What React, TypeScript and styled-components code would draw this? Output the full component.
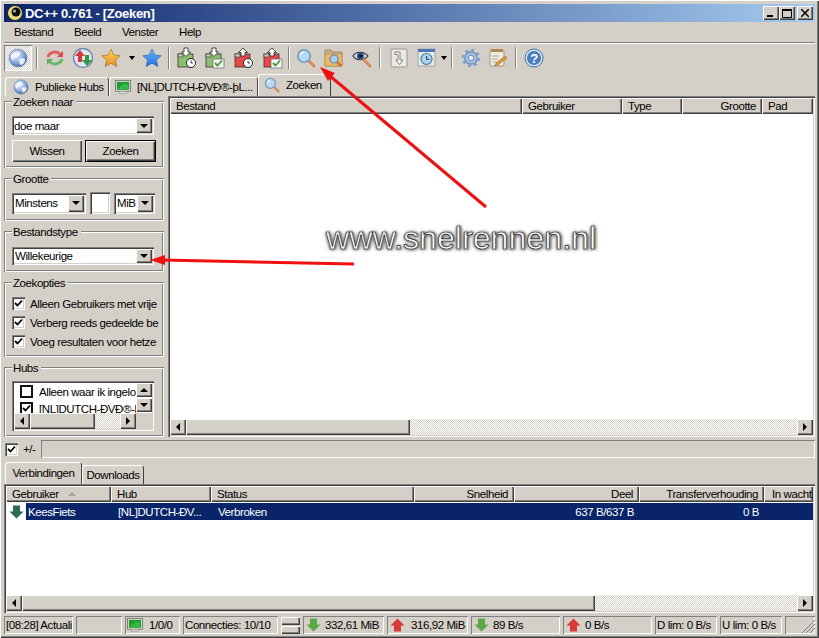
import React from "react"
import styled, { createGlobalStyle, css } from "styled-components"

const face = "#d4d0c8"
const shadow = "#808080"
const dark = "#404040"

const raised = css`
  background: ${face};
  box-shadow: inset 1px 1px 0 #fff, inset -1px -1px 0 ${dark}, inset -2px -2px 0 ${shadow};
`
const sunken = css`
  box-shadow: inset 1px 1px 0 ${shadow}, inset 2px 2px 0 ${dark}, inset -1px -1px 0 #fff, inset -2px -2px 0 ${face};
`
const thinSunken = css`
  box-shadow: inset 1px 1px 0 ${shadow}, inset -1px -1px 0 #fff;
`

const Global = createGlobalStyle`
  html, body { margin: 0; padding: 0; background: ${face}; }
  body { font-family: "Liberation Sans", Arial, sans-serif; font-size: 11.5px; letter-spacing: -0.42px; color: #000; }
  * { box-sizing: border-box; }
  svg { flex: none; }
`

const Window = styled.div`
  position: relative;
  width: 819px;
  height: 638px;
  padding: 4px;
  display: flex;
  flex-direction: column;
  background: ${face};
  overflow: hidden;
  box-shadow: inset 1px 1px 0 #fff, inset -1px -1px 0 ${dark}, inset -2px -2px 0 ${shadow};
`
const TitleBar = styled.div`
  height: 18px;
  flex: none;
  display: flex;
  align-items: center;
  padding: 0 2px 0 3px;
  background: linear-gradient(90deg, #0a246a, #a6caf0);
  color: #fff;
  font-weight: 700;
  font-size: 13px;
  letter-spacing: -0.3px;
  gap: 2px;
`
const TitleText = styled.span`
  flex: 1;
`
const CaptionButton = styled.div<{ $gap?: number }>`
  ${raised}
  width: 16px;
  height: 14px;
  margin-left: ${(p) => p.$gap ?? 0}px;
  display: flex;
  align-items: center;
  justify-content: center;
`
const MenuBar = styled.div`
  height: 20px;
  flex: none;
  display: flex;
  align-items: center;
  padding-left: 10px;
`
const MenuItem = styled.span<{ $width: number }>`
  width: ${(p) => p.$width}px;
`
const Rule = styled.div`
  height: 2px;
  flex: none;
  background: linear-gradient(${shadow} 50%, #fff 50%);
`
const Toolbar = styled.div`
  height: 27px;
  flex: none;
  display: flex;
  align-items: center;
`
const ToolSlot = styled.div<{ $width?: number; $pressed?: boolean }>`
  width: ${(p) => p.$width ?? 28}px;
  height: 26px;
  flex: none;
  display: flex;
  align-items: center;
  justify-content: center;
  ${(p) =>
    p.$pressed &&
    css`
      background: repeating-conic-gradient(#fff 0 25%, ${face} 0 50%) 0 0 / 2px 2px;
      box-shadow: inset 1px 1px 0 ${shadow}, inset -1px -1px 0 #fff;
    `}
`
const ToolSep = styled.div<{ $left?: number; $right?: number }>`
  width: 2px;
  height: 22px;
  flex: none;
  margin: 0 ${(p) => p.$right ?? 4}px 0 ${(p) => p.$left ?? 4}px;
  background: linear-gradient(90deg, ${shadow} 50%, #fff 50%);
`
const Caret = styled.div`
  width: 0;
  height: 0;
  flex: none;
  border: 3px solid transparent;
  border-top: 4px solid #000;
  border-bottom: 0;
`
const CaretSlot = styled.div<{ $width: number }>`
  width: ${(p) => p.$width}px;
  flex: none;
  display: flex;
  justify-content: center;
`
const TabStrip = styled.div`
  height: 25px;
  flex: none;
  display: flex;
  align-items: flex-end;
  padding-left: 1px;
`
const TopTab = styled.div<{ $width: number; $active?: boolean; $pl: number }>`
  width: ${(p) => p.$width}px;
  height: ${(p) => (p.$active ? 22 : 19)}px;
  flex: none;
  display: flex;
  align-items: center;
  gap: 6px;
  padding-left: ${(p) => p.$pl}px;
  white-space: nowrap;
  overflow: hidden;
  border-radius: 3px 3px 0 0;
  box-shadow: inset 1px 1px 0 #fff, inset -1px 0 0 ${dark};
`
const Main = styled.div`
  height: 341px;
  flex: none;
  display: flex;
`
const SidePanel = styled.div`
  width: 164px;
  flex: none;
  display: flex;
  flex-direction: column;
  padding-top: 5px;
`
const Group = styled.fieldset<{ $height: number; $mb: number }>`
  position: relative;
  width: 160px;
  height: ${(p) => p.$height}px;
  margin: 0 0 ${(p) => p.$mb}px 0;
  padding: 0 8px;
  border: 0;
  box-shadow: inset 1px 1px 0 ${shadow}, inset 2px 2px 0 #fff, inset -1px -1px 0 #fff, inset -2px -2px 0 ${shadow};
  display: flex;
  flex-direction: column;
`
const Legend = styled.span`
  position: absolute;
  top: -5px;
  left: 8px;
  padding: 0 3px 0 1px;
  background: ${face};
  line-height: 13px;
`
const Field = styled.div<{ $width: number; $height: number; $pl?: number }>`
  ${sunken}
  width: ${(p) => p.$width}px;
  height: ${(p) => p.$height}px;
  flex: none;
  background: #fff;
  display: flex;
  align-items: center;
  justify-content: space-between;
  padding: 2px 2px 2px ${(p) => p.$pl ?? 3}px;
  white-space: nowrap;
  overflow: hidden;
`
const DropButton = styled.div`
  ${raised}
  width: 16px;
  height: 100%;
  flex: none;
  display: flex;
  align-items: center;
  justify-content: center;
`
const DownCaret = styled(Caret)`
  border-width: 4px 4px 0;
  border-top-color: #000;
`
const ButtonRow = styled.div`
  display: flex;
  gap: 3px;
  margin-top: 5px;
`
const PushButton = styled.div<{ $width: number; $default?: boolean }>`
  ${raised}
  width: ${(p) => p.$width}px;
  height: 22px;
  display: flex;
  align-items: center;
  justify-content: center;
  ${(p) => p.$default && css`
    outline: 1px solid #000;
    outline-offset: -1px;
    box-shadow: inset 2px 2px 0 #fff, inset -2px -2px 0 ${dark}, inset -3px -3px 0 ${shadow};
  `}
`
const FieldRow = styled.div`
  display: flex;
  align-items: center;
  gap: 4px;
`
const CheckRow = styled.div`
  width: 144px;
  height: 19px;
  display: flex;
  align-items: center;
  gap: 5px;
  white-space: nowrap;
`
const Box = styled.div<{ $flat?: boolean }>`
  width: 13px;
  height: 13px;
  flex: none;
  background: #fff;
  display: flex;
  align-items: center;
  justify-content: center;
  ${(p) => (p.$flat ? "border: 2px solid #111;" : sunken)}
`
const HubList = styled.div`
  ${sunken}
  width: 142px;
  height: 50px;
  background: #fff;
  padding: 2px;
  display: grid;
  grid-template-columns: 1fr 16px;
  grid-template-rows: 30px 16px;
`
const HubItems = styled.div`
  padding: 2px 0 0 6px;
  overflow: hidden;
  display: flex;
  flex-direction: column;
  gap: 4px;
`
const HubItem = styled.div`
  display: flex;
  align-items: center;
  gap: 6px;
  height: 13px;
  white-space: nowrap;
`
const VScroll = styled.div`
  display: flex;
  flex-direction: column;
  gap: 1px;
`
const ScrollBtn = styled.div<{ $size?: number }>`
  ${raised}
  width: ${(p) => p.$size ?? 16}px;
  height: ${(p) => p.$size ?? 16}px;
  flex: none;
  display: flex;
  align-items: center;
  justify-content: center;
`
const SmallVBtn = styled(ScrollBtn)`
  height: 14px;
`
const ScrollCorner = styled.div`
  background: ${face};
`
const ScrollTrack = styled.div`
  height: 16px;
  flex: none;
  display: flex;
`
const Thumb = styled.div<{ $width: number }>`
  ${raised}
  width: ${(p) => p.$width}px;
  flex: none;
`
const Dither = styled.div`
  flex: 1;
  background: repeating-conic-gradient(${face} 0 25%, #fff 0 50%) 0 0 / 2px 2px;
`
const Arrow = styled.div<{ $dir: "l" | "r" | "u" | "d" }>`
  width: 0;
  height: 0;
  border-style: solid;
  border-color: transparent;
  ${(p) =>
    p.$dir === "l"
      ? "border-width: 4px 4px 4px 0; border-right-color: #000;"
      : p.$dir === "r"
        ? "border-width: 4px 0 4px 4px; border-left-color: #000;"
        : p.$dir === "u"
          ? "border-width: 0 4px 4px; border-bottom-color: #000;"
          : "border-width: 4px 4px 0; border-top-color: #000;"}
`
const ListPane = styled.div`
  ${sunken}
  flex: 1;
  min-width: 0;
  background: #fff;
  display: flex;
  flex-direction: column;
  padding: 2px;
`
const HeaderRow = styled.div`
  height: 16px;
  flex: none;
  display: flex;
  background: ${face};
`
const HeaderCell = styled.div<{ $width: number; $right?: boolean; $pl?: number }>`
  ${raised}
  width: ${(p) => p.$width}px;
  flex: none;
  display: flex;
  align-items: center;
  justify-content: ${(p) => (p.$right ? "flex-end" : "flex-start")};
  padding: 0 6px 0 ${(p) => p.$pl ?? 6}px;
  white-space: nowrap;
  overflow: hidden;
`
const ListBody = styled.div`
  flex: 1;
  min-height: 0;
`
const Row = styled.div`
  height: 17px;
  margin-top: 1px;
  display: flex;
  align-items: center;
`
const RowIcon = styled.div`
  width: 20px;
  flex: none;
  display: flex;
  justify-content: center;
`
const Selected = styled.div`
  flex: 1;
  height: 100%;
  display: flex;
  align-items: center;
  background: #0a246a;
  color: #fff;
`
const RowCell = styled.div<{ $width: number; $right?: boolean; $pl?: number }>`
  width: ${(p) => p.$width}px;
  flex: none;
  text-align: ${(p) => (p.$right ? "right" : "left")};
  padding: 0 6px 0 ${(p) => p.$pl ?? 6}px;
  white-space: nowrap;
`
const FilterRow = styled.div`
  height: 18px;
  margin-top: 3px;
  flex: none;
  display: flex;
  align-items: center;
  padding-left: 1px;
`
const PlusMinus = styled.span`
  margin-left: 5px;
  width: 18px;
`
const FilterInput = styled.div`
  flex: 1;
  height: 18px;
  box-shadow: inset 1px 1px 0 ${shadow}, inset -1px -1px 0 #fff;
`
const BottomTabs = styled.div`
  height: 23px;
  margin-top: 3px;
  flex: none;
  display: flex;
  align-items: flex-end;
  padding-left: 1px;
`
const BottomTab = styled.div<{ $width: number; $active?: boolean }>`
  width: ${(p) => p.$width}px;
  height: ${(p) => (p.$active ? 22 : 19)}px;
  flex: none;
  display: flex;
  align-items: center;
  justify-content: center;
  border-radius: 3px 3px 0 0;
  box-shadow: inset 1px 1px 0 #fff, inset -1px 0 0 ${dark};
`
const BottomPane = styled.div`
  height: 129px;
  flex: none;
  display: flex;
`
const StatusBar = styled.div`
  height: 18px;
  margin-top: 3px;
  flex: none;
  display: flex;
  gap: 3px;
`
const StatusCell = styled.div<{ $width: number; $gap?: number; $pl?: number }>`
  ${thinSunken}
  width: ${(p) => p.$width}px;
  flex: none;
  display: flex;
  align-items: center;
  gap: ${(p) => p.$gap ?? 6}px;
  padding-left: ${(p) => p.$pl ?? 2}px;
  white-space: nowrap;
  overflow: hidden;
`
const Spinner = styled.div`
  width: 19px;
  flex: none;
  display: flex;
  flex-direction: column;
  justify-content: center;
  gap: 1px;
`
const SpinPart = styled.div`
  ${raised}
  height: 8px;
`
const SortMark = styled.span`
  margin-left: 9px;
  width: 0;
  height: 0;
  border: 4px solid transparent;
  border-top: 0;
  border-bottom: 4px solid #a8a49c;
`
const Spacer = styled.div<{ $h: number }>`
  height: ${(p) => p.$h}px;
  flex: none;
`
const Overlay = styled.svg`
  position: absolute;
  left: 0;
  top: 0;
  pointer-events: none;
`
const Watermark = styled.div`
  position: absolute;
  left: 326px;
  top: 220px;
  font-size: 32.2px;
  line-height: 36px;
  letter-spacing: 0;
  color: #fff;
  -webkit-text-stroke: 0.7px #222;
  text-shadow: 2px 1px 3px #777, -1px 1px 3px #777, 1px -1px 3px #888;
  white-space: nowrap;
`

/* icons */
const Globe = ({ size = 20 }: { size?: number }) => (
  <svg width={size} height={size} viewBox="0 0 20 20">
    <defs>
      <radialGradient id="gl" cx="40%" cy="35%" r="70%">
        <stop offset="0" stopColor="#e8f0fb" />
        <stop offset="0.55" stopColor="#8fb0e0" />
        <stop offset="1" stopColor="#38609f" />
      </radialGradient>
    </defs>
    <circle cx="10" cy="10" r="9" fill="url(#gl)" stroke="#6080b0" strokeWidth="0.6" />
    <path d="M5 5c3-2 6-2 7 0s-2 3-3 4-3 0-3 2-2 1-3-1 0-4 2-5zM12 11c2-1 5-1 5 1s-2 5-4 5-1-3-2-4 0-2 1-2z" fill="#f2f4f8" opacity="0.9" />
  </svg>
)
const Refresh = () => (
  <svg width="20" height="20" viewBox="0 0 20 20" fill="none">
    <path d="M3 9a7 6 0 0 1 12-3" stroke="#e06060" strokeWidth="3" />
    <path d="M18 3v6h-6z" fill="#d84848" />
    <path d="M17 11a7 6 0 0 1-12 3" stroke="#68b868" strokeWidth="3" />
    <path d="M2 17v-6h6z" fill="#58b058" />
  </svg>
)
const GlobeArrows = () => (
  <svg width="22" height="22" viewBox="0 0 22 22">
    <circle cx="11" cy="11" r="9.5" fill="#dfe6f2" stroke="#6b84b0" strokeWidth="1.4" />
    <path d="M3 9l5-6 5 6H10v6H6V9z" fill="#d83838" />
    <path d="M10 13l5 6 5-6h-3V8h-4v5z" fill="#2f9a3f" />
  </svg>
)
const Star = ({ from, to, line, size = 20 }: { from: string; to: string; line: string; size?: number }) => (
  <svg width={size} height={size} viewBox="0 0 20 20">
    <defs>
      <linearGradient id={`st${from.slice(1)}`} x1="0" y1="0" x2="0" y2="1">
        <stop offset="0" stopColor={from} />
        <stop offset="1" stopColor={to} />
      </linearGradient>
    </defs>
    <path d="M10 1l2.8 6 6.4.7-4.8 4.3 1.4 6.5L10 15.2 4.2 18.5 5.6 12 .8 7.7 7.2 7z" fill={`url(#st${from.slice(1)})`} stroke={line} strokeWidth="0.7" />
  </svg>
)
const Queue = ({ color, up, check }: { color: string; up?: boolean; check?: boolean }) => (
  <svg width="20" height="22" viewBox="0 0 20 22">
    <rect x="1" y="7" width="15" height="13" fill={color} stroke="#333" strokeWidth="0.8" />
    <rect x="1" y="7" width="5" height="3" fill="#c8c8c0" stroke="#333" strokeWidth="0.6" />
    <path d={up ? "M9 1l4.5 4.5H11V9H7V5.5H4.500z" : "M7 1h4v4h2.500L9 9.500 4.500 5H7z"} fill="#fff" stroke="#222" strokeWidth="0.8" />
    {check ? (
      <g>
        <rect x="8" y="12" width="11" height="9" fill="#f4f4f0" stroke="#555" strokeWidth="0.6" />
        <path d="M10 16l2.500 2.500 4.500-5" fill="none" stroke="#3a9a3a" strokeWidth="1.800" />
      </g>
    ) : (
      <g>
        <circle cx="14" cy="16" r="4.500" fill="#fff" stroke="#222" strokeWidth="1" />
        <path d="M14 13.500V16h2" fill="none" stroke="#222" strokeWidth="0.9" />
      </g>
    )}
  </svg>
)
const Handle = () => <path d="M12 12l6 6" stroke="#d88a58" strokeWidth="3" strokeLinecap="round" />
const Magnifier = ({ size = 20 }: { size?: number }) => (
  <svg width={size} height={size} viewBox="0 0 20 20">
    <Handle />
    <circle cx="8" cy="8" r="6.200" fill="#b9d8f2" stroke="#6f9cc4" strokeWidth="1.600" />
    <path d="M4.500 7a4 4 0 0 1 3-3" stroke="#fff" strokeWidth="1.300" fill="none" />
  </svg>
)
const FolderSearch = () => (
  <svg width="20" height="20" viewBox="0 0 20 20">
    <path d="M1 2h6l2 2h9v14H1z" fill="#c9ae88" stroke="#8c8068" strokeWidth="0.8" />
    <rect x="1" y="6" width="17" height="12" fill="#f0b860" stroke="#b08848" strokeWidth="0.6" />
    <path d="M12 13l5 5" stroke="#d07040" strokeWidth="2.500" />
    <circle cx="10" cy="11" r="4" fill="#a8d0ee" stroke="#6288b0" strokeWidth="1.200" />
  </svg>
)
const EyeSearch = () => (
  <svg width="20" height="20" viewBox="0 0 20 20">
    <path d="M1 8c3-5 11-5 15 0-4 5-12 5-15 0z" fill="#d8d8d8" stroke="#333" strokeWidth="1.200" />
    <circle cx="8.500" cy="8" r="3.500" fill="#2c4f8c" />
    <circle cx="8.500" cy="8" r="1.500" fill="#111" />
    <path d="M12 12l6 6" stroke="#d88a58" strokeWidth="3" strokeLinecap="round" />
  </svg>
)
const PageReturn = () => (
  <svg width="18" height="20" viewBox="0 0 18 20">
    <rect x="1" y="1" width="16" height="18" rx="1" fill="#e8e8e4" stroke="#98968e" />
    <path d="M5 4h5v8h3l-3.500 4.500L6 12h2V6.500H5z" fill="#fbfbf8" stroke="#66665f" strokeWidth="0.8" />
  </svg>
)
const WindowClock = () => (
  <svg width="20" height="20" viewBox="0 0 20 20">
    <rect x="1" y="1" width="17" height="17" fill="#e8e8e4" stroke="#a8a8a0" />
    <rect x="1" y="1" width="17" height="3" fill="#4c78b8" />
    <circle cx="9.500" cy="11" r="5.500" fill="#a8d4ee" stroke="#4c78a8" strokeWidth="1.200" />
    <path d="M9.500 8v3.300h3" stroke="#335" strokeWidth="1" fill="none" />
  </svg>
)
const Gear = () => (
  <svg width="20" height="20" viewBox="0 0 20 20">
    <circle cx="10" cy="10" r="6.200" fill="#a8c4e4" stroke="#5f86b8" strokeWidth="1.200" />
    <circle cx="10" cy="10" r="8" fill="none" stroke="#7ea0cc" strokeWidth="2.600" strokeDasharray="3 3.280" />
    <circle cx="10" cy="10" r="2.800" fill="#e8eef6" stroke="#5f86b8" />
  </svg>
)
const Notes = () => (
  <svg width="20" height="20" viewBox="0 0 20 20">
    <rect x="2" y="2" width="14" height="16" rx="1" fill="#f0ece0" stroke="#a09888" />
    <rect x="3" y="1" width="12" height="3" fill="#b08858" />
    <path d="M4 8h7M4 11h6M4 14h5" stroke="#b0a898" />
    <path d="M8 15l9-7 2 2-9 7-3 1z" fill="#e09a40" stroke="#8a5a20" strokeWidth="0.500" />
  </svg>
)
const HelpIcon = () => (
  <svg width="20" height="20" viewBox="0 0 20 20">
    <circle cx="10" cy="10" r="9" fill="#e8f0f8" stroke="#3f66a8" strokeWidth="1" />
    <circle cx="10" cy="10" r="7.200" fill="#4f7ec0" />
    <text x="10" y="14.500" textAnchor="middle" fontSize="13" fontWeight="700" fontFamily="Liberation Sans" fill="#fff">?</text>
  </svg>
)
const Monitor = () => (
  <svg width="16" height="16" viewBox="0 0 17 15">
    <rect x="0.500" y="0.500" width="16" height="11.500" fill="#e0e0dc" stroke="#777" />
    <rect x="2" y="2" width="13" height="8.500" fill="#1f9a2a" />
    <path d="M3 9l6-5 5 1v5H3z" fill="#38b844" />
    <rect x="5" y="12" width="7" height="2.500" fill="#d8d8d4" stroke="#888" strokeWidth="0.500" />
  </svg>
)
const UpDown = ({ up, color }: { up?: boolean; color: string }) => (
  <svg width="15" height="14" viewBox="0 0 15 14">
    <path d={up ? "M7.500 0.500L14.500 7.500H11V13.500H4V7.500H0.500z" : "M4 0.500H11V6.500H14.500L7.500 13.500L0.500 6.500H4z"} fill={color} />
  </svg>
)
const Tick = () => (
  <svg width="9" height="9" viewBox="0 0 9 9">
    <path d="M1 4l2.500 2.500L8 1.500" fill="none" stroke="#000" strokeWidth="1.800" />
  </svg>
)
const AppLogo = () => (
  <svg width="16" height="16" viewBox="0 0 16 16">
    <circle cx="8" cy="8" r="7.500" fill="#e8d880" stroke="#222" />
    <circle cx="9" cy="7" r="4.500" fill="#111" />
    <circle cx="7.500" cy="6" r="1.500" fill="#aaa" />
  </svg>
)

const Combo = ({ width, height, label, pl }: { width: number; height: number; label: string; pl?: number }) => (
  <Field $width={width} $height={height} $pl={pl}>
    <span>{label}</span>
    <DropButton>
      <DownCaret />
    </DropButton>
  </Field>
)

const CheckOption = ({ label }: { label: string }) => (
  <CheckRow>
    <Box>
      <Tick />
    </Box>
    <span>{label}</span>
  </CheckRow>
)

const HScroll = ({ thumb, size = 16 }: { thumb: number; size?: number }) => (
  <ScrollTrack>
    <ScrollBtn $size={size}>
      <Arrow $dir="l" />
    </ScrollBtn>
    <Thumb $width={thumb} />
    <Dither />
    <ScrollBtn $size={size}>
      <Arrow $dir="r" />
    </ScrollBtn>
  </ScrollTrack>
)

const searchCols = [
  { label: "Bestand", width: 352 },
  { label: "Gebruiker", width: 100 },
  { label: "Type", width: 60 },
  { label: "Grootte", width: 80, right: true },
  { label: "Pad", width: 51 },
]
const transferCols = [
  { label: "Gebruiker", width: 105, sort: true },
  { label: "Hub", width: 100 },
  { label: "Status", width: 203 },
  { label: "Snelheid", width: 100, right: true },
  { label: "Deel", width: 125, right: true },
  { label: "Transferverhouding", width: 125, right: true },
  { label: "In wacht", width: 49, pl: 8 },
]

export default function App() {
  return (
    <Window>
      <Global />
      <TitleBar>
        <AppLogo />
        <TitleText>DC++ 0.761 - [Zoeken]</TitleText>
        <CaptionButton>
          <svg width="8" height="8" viewBox="0 0 8 8"><rect x="0" y="6" width="6" height="2" /></svg>
        </CaptionButton>
        <CaptionButton $gap={-2}>
          <svg width="10" height="9" viewBox="0 0 10 9"><path d="M.5 1.500h9v7h-9z" fill="none" stroke="#000" /><rect width="10" height="2" /></svg>
        </CaptionButton>
        <CaptionButton>
          <svg width="8" height="8" viewBox="0 0 8 8"><path d="M0 0l8 8M8 0L0 8" stroke="#000" strokeWidth="1.500" /></svg>
        </CaptionButton>
      </TitleBar>
      <MenuBar>
        <MenuItem $width={60}>Bestand</MenuItem>
        <MenuItem $width={48}>Beeld</MenuItem>
        <MenuItem $width={57}>Venster</MenuItem>
        <MenuItem $width={40}>Help</MenuItem>
      </MenuBar>
      <Rule />
      <Toolbar>
        <ToolSlot $pressed><Globe /></ToolSlot>
        <ToolSep $right={3} />
        <ToolSlot><Refresh /></ToolSlot>
        <ToolSlot><GlobeArrows /></ToolSlot>
        <ToolSlot><Star from="#ffd860" to="#e88c20" line="#a07020" /></ToolSlot>
        <CaretSlot $width={13}><Caret /></CaretSlot>
        <ToolSlot><Star from="#70b8f8" to="#2070e0" line="#3068b0" /></ToolSlot>
        <ToolSep $left={2} $right={3} />
        <ToolSlot><Queue color="#8cc070" /></ToolSlot>
        <ToolSlot><Queue color="#8cc070" check /></ToolSlot>
        <ToolSlot $width={29}><Queue color="#e84848" up /></ToolSlot>
        <ToolSlot $width={29}><Queue color="#e84848" up check /></ToolSlot>
        <ToolSep $left={1} $right={2} />
        <ToolSlot><Magnifier /></ToolSlot>
        <ToolSlot><FolderSearch /></ToolSlot>
        <ToolSlot><EyeSearch /></ToolSlot>
        <ToolSep $left={3} $right={4} />
        <ToolSlot><PageReturn /></ToolSlot>
        <ToolSlot><WindowClock /></ToolSlot>
        <CaretSlot $width={6}><Caret /></CaretSlot>
        <ToolSep />
        <ToolSlot $width={27}><Gear /></ToolSlot>
        <ToolSlot><Notes /></ToolSlot>
        <ToolSep $left={3} $right={3} />
        <ToolSlot><HelpIcon /></ToolSlot>
      </Toolbar>
      <TabStrip>
        <TopTab $width={104} $pl={8}><Globe size={16} />Publieke Hubs</TopTab>
        <TopTab $width={149} $pl={6}><Monitor />[NL]DUTCH-ÐVÐ®-þL...</TopTab>
        <TopTab $width={73} $pl={6} $active><Magnifier size={16} />Zoeken</TopTab>
      </TabStrip>
      <Main>
        <SidePanel>
          <Group $height={67} $mb={10}>
            <Legend>Zoeken naar</Legend>
            <Spacer $h={15} />
            <Combo width={142} height={19} label="doe maar" pl={2} />
            <ButtonRow>
              <PushButton $width={70}>Wissen</PushButton>
              <PushButton $width={71} $default>Zoeken</PushButton>
            </ButtonRow>
          </Group>
          <Group $height={43} $mb={10}>
            <Legend>Grootte</Legend>
            <Spacer $h={14} />
            <FieldRow>
              <Combo width={74} height={21} label="Minstens" />
              <Field $width={20} $height={22} />
              <Combo width={41} height={21} label="MiB" />
            </FieldRow>
          </Group>
          <Group $height={41} $mb={10}>
            <Legend>Bestandstype</Legend>
            <Spacer $h={16} />
            <Combo width={142} height={18} label="Willekeurige" />
          </Group>
          <Group $height={75} $mb={10}>
            <Legend>Zoekopties</Legend>
            <Spacer $h={12} />
            <CheckOption label="Alleen Gebruikers met vrije" />
            <CheckOption label="Verberg reeds gedeelde be" />
            <CheckOption label="Voeg resultaten voor hetze" />
          </Group>
          <Group $height={70} $mb={0}>
            <Legend>Hubs</Legend>
            <Spacer $h={14} />
            <HubList>
              <HubItems>
                <HubItem><Box $flat />Alleen waar ik ingelo</HubItem>
                <HubItem><Box $flat><Tick /></Box>[NL]DUTCH-ÐVÐ®-þ</HubItem>
              </HubItems>
              <VScroll>
                <SmallVBtn><Arrow $dir="u" /></SmallVBtn>
                <SmallVBtn><Arrow $dir="d" /></SmallVBtn>
              </VScroll>
              <HScroll thumb={65} />
              <ScrollCorner />
            </HubList>
          </Group>
        </SidePanel>
        <ListPane>
          <HeaderRow>
            {searchCols.map((c) => (
              <HeaderCell key={c.label} $width={c.width} $right={c.right}>{c.label}</HeaderCell>
            ))}
          </HeaderRow>
          <ListBody />
          <HScroll thumb={224} />
        </ListPane>
      </Main>
      <FilterRow>
        <Box><Tick /></Box>
        <PlusMinus>+/-</PlusMinus>
        <FilterInput />
      </FilterRow>
      <BottomTabs>
        <BottomTab $width={77} $active>Verbindingen</BottomTab>
        <BottomTab $width={62}>Downloads</BottomTab>
      </BottomTabs>
      <BottomPane>
        <ListPane>
          <HeaderRow>
            {transferCols.map((c) => (
              <HeaderCell key={c.label} $width={c.width} $right={c.right} $pl={c.pl}>
                {c.label}
                {c.sort && <SortMark />}
              </HeaderCell>
            ))}
          </HeaderRow>
          <ListBody>
            <Row>
              <RowIcon><UpDown color="#2f6a52" /></RowIcon>
              <Selected>
                <RowCell $width={86} $pl={2}>KeesFiets</RowCell>
                <RowCell $width={100}>[NL]DUTCH-ÐV...</RowCell>
                <RowCell $width={203}>Verbroken</RowCell>
                <RowCell $width={100} $right />
                <RowCell $width={125} $right>637 B/637 B</RowCell>
                <RowCell $width={125} $right>0 B</RowCell>
              </Selected>
            </Row>
          </ListBody>
          <HScroll thumb={573} />
        </ListPane>
      </BottomPane>
      <StatusBar>
        <StatusCell $width={69}>[08:28] Actuali</StatusCell>
        <StatusCell $width={46} />
        <StatusCell $width={55} $pl={2}><Monitor />1/0/0</StatusCell>
        <StatusCell $width={95}>Connecties: 10/10</StatusCell>
        <Spinner><SpinPart /><SpinPart /></Spinner>
        <StatusCell $width={81} $pl={3} $gap={4}><UpDown color="#58a848" />332,61 MiB</StatusCell>
        <StatusCell $width={81} $pl={3} $gap={6}><UpDown up color="#d83838" />316,92 MiB</StatusCell>
        <StatusCell $width={89} $pl={3} $gap={4}><UpDown color="#58a848" />89 B/s</StatusCell>
        <StatusCell $width={89} $pl={3} $gap={4}><UpDown up color="#d83838" />0 B/s</StatusCell>
        <StatusCell $width={62}>D lim: 0 B/s</StatusCell>
        <StatusCell $width={62}>U lim: 0 B/s</StatusCell>
        <StatusCell $width={30} />
      </StatusBar>
      <Overlay width="819" height="638" viewBox="0 0 819 638">
        <path d="M486 207L330 76" stroke="#f01010" strokeWidth="3" />
        <path d="M320 67l15 6-7 8z" fill="#f01010" />
        <path d="M354 264L162 260" stroke="#f01010" strokeWidth="3" />
        <path d="M150 260l15-5v10z" fill="#f01010" />
        <path d="M815 624l-9 9M815 628l-5 5M815 620l-13 13" stroke="#808080" strokeWidth="1" />
      </Overlay>
      <Watermark>www.snelrennen.nl</Watermark>
    </Window>
  )
}
